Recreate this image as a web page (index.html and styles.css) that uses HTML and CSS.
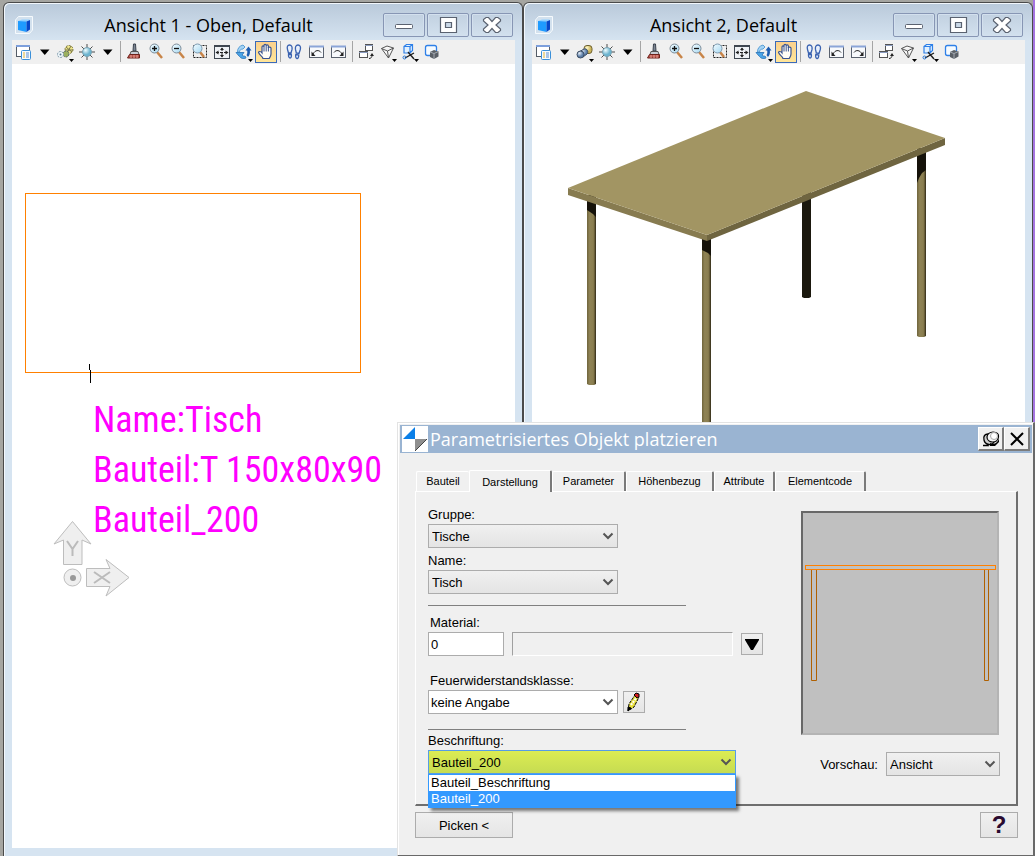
FILE: index.html
```html
<!DOCTYPE html>
<html lang="de">

<head>
    <meta charset="UTF-8">
    <meta name="viewport" content="width=device-width, initial-scale=1.0">
    <title>Parametrisiertes Objekt platzieren</title>
    <link rel="stylesheet" href="styles.css">
</head>

<body>
    <!-- shared icons -->
    <svg class="sprite" aria-hidden="true">
        <defs>
            <linearGradient id="lens" x1="0" y1="0" x2="1" y2="1">
                <stop offset="0" stop-color="#f4fcff"/>
                <stop offset="1" stop-color="#a5d8f2"/>
            </linearGradient>
            <radialGradient id="ball" cx="35%" cy="30%">
                <stop offset="0" stop-color="#f0fdff"/>
                <stop offset="1" stop-color="#6cb4cf"/>
            </radialGradient>
            <radialGradient id="gold" cx="35%" cy="30%">
                <stop offset="0" stop-color="#fffbd0"/>
                <stop offset="1" stop-color="#cdb55a"/>
            </radialGradient>
            <radialGradient id="steel" cx="35%" cy="30%">
                <stop offset="0" stop-color="#e6eef8"/>
                <stop offset="1" stop-color="#5b7ea8"/>
            </radialGradient>
            <linearGradient id="leg" x1="0" x2="1" y1="0" y2="0">
                <stop offset="0" stop-color="#6f643c"/>
                <stop offset="0.3" stop-color="#8f8355"/>
                <stop offset="0.7" stop-color="#8a7e50"/>
                <stop offset="0.85" stop-color="#665b36"/>
                <stop offset="1" stop-color="#2c2716"/>
            </linearGradient>
        </defs>
        <symbol id="i-app" viewBox="0 0 20 20">
            <path d="M4.500 1.500H18.500V15l-3 3.500H1.500V5z" fill="#d3e1ee" stroke="#f6fafd"/>
            <path d="M4 6l4-1.500h8l-3.500 2z" fill="#8fd0ff"/>
            <path d="M4 6l8.500 .5V17L4 15z" fill="#1e9bff"/>
            <path d="M12.500 6.500L16 5v9.500L12.500 17z" fill="#0647c8"/>
        </symbol>
        <symbol id="i-attr" viewBox="0 0 22 22">
            <rect x="3.500" y="4.500" width="13" height="11" fill="#fff" stroke="#555c66"/>
            <path d="M3 5h14" stroke="#7d9fdc" stroke-width="2"/>
            <rect x="8.500" y="9.500" width="9" height="9" rx="1" fill="#f4faff" stroke="#3a8fd8"/>
            <path d="M10 12h2M10 14h2M10 16h2" stroke="#e5b530"/>
            <path d="M13 12h3M13 14h3M13 16h3" stroke="#5e90d0"/>
        </symbol>
        <symbol id="i-down" viewBox="0 0 19 22">
            <path d="M5 8.500h9.500L9.750 14z" fill="#000"/>
        </symbol>
        <symbol id="i-corner" viewBox="0 0 22 22">
            <path d="M15 18h5l-2.500 3z" fill="#000"/>
        </symbol>
        <symbol id="i-wire" viewBox="0 0 22 22">
            <circle cx="15" cy="8.500" r="4" fill="#f0e68a" stroke="#7d7744" stroke-dasharray="2 1"/>
            <path d="M12 6l6 5M17 5l-4 7M11 9h8" stroke="#77774a"/>
            <circle cx="12" cy="13" r="3" fill="#9bb05f" stroke="#566" stroke-dasharray="2 1"/>
            <circle cx="6.500" cy="13.500" r="3" fill="#eef6fa" stroke="#7a96a8" stroke-dasharray="2 1"/>
            <circle cx="6.500" cy="13.500" r="1" fill="#5a7890"/>
        </symbol>
        <symbol id="i-shade" viewBox="0 0 22 22">
            <rect x="10" y="4.500" width="8" height="8" rx="3" fill="url(#gold)" stroke="#6d6030"/>
            <path d="M5 11l5-3c3-1 5 3 3 5l-4 3z" fill="url(#steel)" stroke="#3c4d63"/>
            <circle cx="6.500" cy="13.500" r="3.500" fill="url(#steel)" stroke="#3c4d63"/>
        </symbol>
        <symbol id="i-light" viewBox="0 0 22 22">
            <path d="M11 3v16M3 11h16M5.500 5.500l11 11M16.500 5.500l-11 11" stroke="#4c4c4c"/>
            <circle cx="11" cy="11" r="4.500" fill="url(#ball)" stroke="#7ba2b2"/>
        </symbol>
        <symbol id="i-brush" viewBox="0 0 22 22">
            <path d="M10.500 3h2l.5 7h-3z" fill="#7d8794" stroke="#39414d"/>
            <path d="M8 10.500h7l1 3H7z" fill="#c9ced6" stroke="#555"/>
            <path d="M6.500 13.500h10V17h-12z" fill="#b8564c" stroke="#6e211a"/>
            <path d="M8 17v-3M11 17v-3M14 17v-3" stroke="#e9a098"/>
        </symbol>
        <symbol id="i-zin" viewBox="0 0 22 22">
            <path d="M12 11l5 6" stroke="#c88448" stroke-width="2.500"/>
            <circle cx="9.500" cy="7.500" r="4.500" fill="url(#lens)" stroke="#7d8b98"/>
            <path d="M7 7.500h5M9.500 5v5" stroke="#111" stroke-width="1.300"/>
        </symbol>
        <symbol id="i-zout" viewBox="0 0 22 22">
            <path d="M12 11l5 6" stroke="#c88448" stroke-width="2.500"/>
            <circle cx="9.500" cy="7.500" r="4.500" fill="url(#lens)" stroke="#7d8b98"/>
            <path d="M7 7.500h5" stroke="#111" stroke-width="1.300"/>
        </symbol>
        <symbol id="i-zwin" viewBox="0 0 22 22">
            <rect x="4.500" y="4.500" width="13" height="12" fill="none" stroke="#222" stroke-dasharray="2 1"/>
            <path d="M11 11l4 5" stroke="#c88448" stroke-width="2.500"/>
            <circle cx="8.500" cy="7.500" r="4.500" fill="url(#lens)" stroke="#7d9ab0"/>
        </symbol>
        <symbol id="i-fit" viewBox="0 0 22 22">
            <rect x="3.500" y="4.500" width="15" height="13" fill="#eef1f5" stroke="#3e4650"/>
            <path d="M3 5.500h16" stroke="#3e4650"/>
            <path d="M5 11.500h12M11 7v9" stroke="#222" stroke-dasharray="3 1"/>
            <path d="M4.500 11.500l3-2v4zM17.500 11.500l-3-2v4zM11 6.500l-2 2.500h4zM11 16.500l-2-2.500h4z" fill="#222"/>
        </symbol>
        <symbol id="i-rot" viewBox="0 0 22 22">
            <path d="M10 4l2 2-2 2c-2 0-3.500 1-3.500 3H4.500c0-4 2-6 5.500-7z" fill="#a5d4f5" stroke="#5a9fd6"/>
            <path d="M3 11.500h8L9 14c1 1 2 1.500 3 1l1 2c-3 1-5 .5-6.500-1.500z" fill="#4aa5e8" stroke="#3a80bf"/>
            <path d="M12.500 9.500l3-4 3 4h-1.700c.5 3-.3 5-1.800 6.500l-1.500-2c.8-1 1-2.500 .7-4.500z" fill="#1c5cb0"/>
        </symbol>
        <symbol id="i-hand" viewBox="0 0 22 22">
            <path d="M8 17.500c-.5-2-3-3-4.500-6 .3-1.500 2.200-1.300 3.500 .5V6c0-1.500 2-1.500 2 0V4.500c0-1.500 2.200-1.500 2.200 0V5c0-1.500 2.200-1.500 2.200 .3V7c0-1.300 2.600-1.300 2.600 .3V13c0 2-.8 3-1.800 4.500z" fill="#fffdf5" stroke="#3a5490" stroke-width="1.200"/>
            <path d="M9 6v4.500M11.200 5v5.500M13.400 6v4.500" stroke="#3a5490"/>
        </symbol>
        <symbol id="i-feet" viewBox="0 0 22 22">
            <path d="M6.500 4c2 0 3 2 2.500 4.500L8 12H5.500L4.500 8.500C3.800 6 4.500 4 6.500 4zM5.500 13.500h2.800c.4 2-.2 3.500-1.200 3.500s-1.800-1.500-1.600-3.500z" fill="#e8f0fc" stroke="#3a62b0" stroke-width="1.300"/>
            <path d="M15 4c2 0 3 2 2.300 4.500L16 12.500l-2.700-.5L12.500 8.500C12 6 13 4 15 4zM12.800 13.500l2.900 .5c.2 2-.8 3.800-1.800 3.500-1.200-.2-1.500-2-1.100-4z" fill="#e8f0fc" stroke="#3a62b0" stroke-width="1.300"/>
        </symbol>
        <symbol id="i-prev" viewBox="0 0 22 22">
            <rect x="4.500" y="5.500" width="14" height="11" fill="#f7f9fc" stroke="#59616e"/>
            <path d="M4 5.500h15" stroke="#8ba5d8" stroke-width="2"/>
            <path d="M8 13c2-4 6-4.500 8-1.500" fill="none" stroke="#222"/>
            <path d="M6.500 10.500v4.500h4z" fill="#222"/>
        </symbol>
        <symbol id="i-next" viewBox="0 0 22 22">
            <rect x="4.500" y="5.500" width="14" height="11" fill="#f7f9fc" stroke="#59616e"/>
            <path d="M4 5.500h15" stroke="#8ba5d8" stroke-width="2"/>
            <path d="M7 11.500c2-3 6-2.500 8 1.500" fill="none" stroke="#222"/>
            <path d="M16.500 10.500v4.500h-4z" fill="#222"/>
        </symbol>
        <symbol id="i-copy" viewBox="0 0 22 22">
            <rect x="10.500" y="3.500" width="7" height="6" fill="#fff" stroke="#555"/>
            <rect x="4.500" y="10.500" width="8" height="6" fill="#fff" stroke="#555"/>
            <path d="M10 4.500h8M4 11.500h9" stroke="#8b9cc0"/>
            <path d="M14 17.500c2 0 3-1.500 3-3" fill="none" stroke="#222"/>
            <path d="M17 12l-2 3h4z" fill="#222"/>
        </symbol>
        <symbol id="i-persp" viewBox="0 0 22 22">
            <path d="M4.500 7.500L10 5l6.500 2-5 10zM4.500 7.500l6 2.500 6-3M10.500 10l1 7" fill="#fafafa" stroke="#555"/>
        </symbol>
        <symbol id="i-clip" viewBox="0 0 22 22">
            <path d="M5 5.500l2.500-2h6v6l-2.500 2.500H5zM5 5.500h6v6.500M11 5.500l2.500-2" fill="#e2f1ff" stroke="#2f80e8" stroke-width="1.200"/>
            <path d="M6 17l9-5M9 11l6 7" stroke="#1c1c1c" stroke-width="1.400"/>
            <circle cx="5.500" cy="16.500" r="1.500" fill="none" stroke="#2273d8"/>
        </symbol>
        <symbol id="i-mask" viewBox="0 0 22 22">
            <rect x="4.500" y="4.500" width="11" height="10" rx="2" fill="#f6fbff" stroke="#2f80e8" stroke-width="1.300"/>
            <path d="M9 11l4-2 4.500 1.500v5L13 18l-4-2z" fill="#5a5f66"/>
            <path d="M9 11l4 1.500 4.500-2M13 12.500V18" fill="none" stroke="#a5abb2"/>
        </symbol>
        <symbol id="i-min" viewBox="0 0 22 22">
            <rect x="2.500" y="10.500" width="17" height="4" rx="1" fill="#fff" stroke="#5a6270"/>
        </symbol>
        <symbol id="i-max" viewBox="0 0 22 22">
            <path d="M3.500 3.500h16v15h-16zM8.500 8.500v5h6v-5z" fill="#fff" fill-rule="evenodd" stroke="#5a6270" stroke-width="1.200"/>
        </symbol>
        <symbol id="i-x" viewBox="0 0 22 22">
            <path d="M2.500 5.500L5 3.500h2.500L11 7.500l3.500-4H17l2.500 2V7L15 11l4.500 4v1.500l-2.500 2h-2.500L11 14.500l-3.500 4H5l-2.500-2V15L7 11 2.500 7z" fill="#fff" stroke="#5a6270" stroke-width="1.200"/>
        </symbol>
        <symbol id="i-chev" viewBox="0 0 12 12">
            <path d="M1.500 3.500L6 8l4.500-4.500" fill="none" stroke="#555" stroke-width="2"/>
        </symbol>
    </svg>

    <div class="desktop">
        <section class="view">
            <header class="view-title">
                <svg class="app-icon"><use href="#i-app"/></svg>
                <h2>Ansicht 1 - Oben, Default</h2>
                <div class="caption-buttons">
                    <button type="button" aria-label="Minimieren"><svg><use href="#i-min"/></svg></button>
                    <button type="button" aria-label="Maximieren"><svg><use href="#i-max"/></svg></button>
                    <button type="button" aria-label="Schließen"><svg><use href="#i-x"/></svg></button>
                </div>
            </header>
            <div class="toolbar" role="toolbar">
                <button type="button" aria-label="Ansichtsattribute"><svg><use href="#i-attr"/></svg></button>
                <button type="button" class="arrow" aria-label="Mehr"><svg><use href="#i-down"/></svg></button>
                <button type="button" aria-label="Darstellungsart"><svg><use href="#i-wire"/><use href="#i-corner"/></svg></button>
                <button type="button" aria-label="Helligkeit"><svg><use href="#i-light"/></svg></button>
                <button type="button" class="arrow" aria-label="Mehr"><svg><use href="#i-down"/></svg></button>
                <span class="sep"></span>
                <button type="button" aria-label="Aktualisieren"><svg><use href="#i-brush"/></svg></button>
                <button type="button" aria-label="Vergrößern"><svg><use href="#i-zin"/></svg></button>
                <button type="button" aria-label="Verkleinern"><svg><use href="#i-zout"/></svg></button>
                <button type="button" aria-label="Ausschnitt"><svg><use href="#i-zwin"/></svg></button>
                <button type="button" aria-label="Einpassen"><svg><use href="#i-fit"/></svg></button>
                <button type="button" aria-label="Drehen"><svg><use href="#i-rot"/><use href="#i-corner"/></svg></button>
                <button type="button" class="active" aria-label="Schwenken"><svg><use href="#i-hand"/></svg></button>
                <span class="sep"></span>
                <button type="button" aria-label="Begehen"><svg><use href="#i-feet"/></svg></button>
                <button type="button" aria-label="Vorherige Ansicht"><svg><use href="#i-prev"/></svg></button>
                <button type="button" aria-label="Nächste Ansicht"><svg><use href="#i-next"/></svg></button>
                <span class="sep"></span>
                <button type="button" aria-label="Ansicht kopieren"><svg><use href="#i-copy"/></svg></button>
                <button type="button" aria-label="Perspektive"><svg><use href="#i-persp"/><use href="#i-corner"/></svg></button>
                <button type="button" aria-label="Volumen beschneiden"><svg><use href="#i-clip"/><use href="#i-corner"/></svg></button>
                <button type="button" aria-label="Maske"><svg><use href="#i-mask"/></svg></button>
            </div>
            <div class="canvas">
                <svg width="388" height="560" viewBox="12 64 388 560">
                    <rect x="25.500" y="193.500" width="335" height="179" fill="none" stroke="#ff8000"/>
                    <path d="M89.500 364v6M90.500 370v13" stroke="#000"/>
                    <g class="label">
                        <text x="93" y="432">Name:Tisch</text>
                        <text x="93" y="482">Bauteil:T 150x80x90</text>
                        <text x="93" y="532">Bauteil_200</text>
                    </g>
                    <g fill="#efefef" stroke="#bdbdbd">
                        <path d="M72.500 521.500L91 544l-9-4v24.500H63.500V540L54 544z"/>
                        <path d="M86.500 568.500H110l-4-9 23 18-23 18.500 4-9.500H86.500z"/>
                        <circle cx="72.500" cy="577.500" r="8.500"/>
                    </g>
                    <circle cx="73" cy="578" r="3" fill="#999"/>
                    <path d="M67 541l5.500 8 5.500-8M72.500 549v7M94 572l16 11M110 572l-16 11" fill="none" stroke="#bbb" stroke-width="2"/>
                </svg>
            </div>
        </section>

        <section class="view">
            <header class="view-title">
                <svg class="app-icon"><use href="#i-app"/></svg>
                <h2>Ansicht 2, Default</h2>
                <div class="caption-buttons">
                    <button type="button" aria-label="Minimieren"><svg><use href="#i-min"/></svg></button>
                    <button type="button" aria-label="Maximieren"><svg><use href="#i-max"/></svg></button>
                    <button type="button" aria-label="Schließen"><svg><use href="#i-x"/></svg></button>
                </div>
            </header>
            <div class="toolbar" role="toolbar">
                <button type="button" aria-label="Ansichtsattribute"><svg><use href="#i-attr"/></svg></button>
                <button type="button" class="arrow" aria-label="Mehr"><svg><use href="#i-down"/></svg></button>
                <button type="button" aria-label="Darstellungsart"><svg><use href="#i-shade"/><use href="#i-corner"/></svg></button>
                <button type="button" aria-label="Helligkeit"><svg><use href="#i-light"/></svg></button>
                <button type="button" class="arrow" aria-label="Mehr"><svg><use href="#i-down"/></svg></button>
                <span class="sep"></span>
                <button type="button" aria-label="Aktualisieren"><svg><use href="#i-brush"/></svg></button>
                <button type="button" aria-label="Vergrößern"><svg><use href="#i-zin"/></svg></button>
                <button type="button" aria-label="Verkleinern"><svg><use href="#i-zout"/></svg></button>
                <button type="button" aria-label="Ausschnitt"><svg><use href="#i-zwin"/></svg></button>
                <button type="button" aria-label="Einpassen"><svg><use href="#i-fit"/></svg></button>
                <button type="button" aria-label="Drehen"><svg><use href="#i-rot"/><use href="#i-corner"/></svg></button>
                <button type="button" class="active" aria-label="Schwenken"><svg><use href="#i-hand"/></svg></button>
                <span class="sep"></span>
                <button type="button" aria-label="Begehen"><svg><use href="#i-feet"/></svg></button>
                <button type="button" aria-label="Vorherige Ansicht"><svg><use href="#i-prev"/></svg></button>
                <button type="button" aria-label="Nächste Ansicht"><svg><use href="#i-next"/></svg></button>
                <span class="sep"></span>
                <button type="button" aria-label="Ansicht kopieren"><svg><use href="#i-copy"/></svg></button>
                <button type="button" aria-label="Perspektive"><svg><use href="#i-persp"/><use href="#i-corner"/></svg></button>
                <button type="button" aria-label="Volumen beschneiden"><svg><use href="#i-clip"/><use href="#i-corner"/></svg></button>
                <button type="button" aria-label="Maske"><svg><use href="#i-mask"/></svg></button>
            </div>
            <div class="canvas">
                <svg width="493" height="400" viewBox="532 64 493 400">
                    <!-- legs -->
                    <path d="M802 190h9v107l-2 1h-5l-2-1z" fill="#1b180e"/>
                    <path d="M587 195h9v189l-2 1h-5l-2-1z" fill="url(#leg)"/>
                    <path d="M587 195h9v22l-3-3-6-4z" fill="#15120a"/>
                    <path d="M917 148h9v188l-2 1h-5l-2-1z" fill="url(#leg)"/>
                    <path d="M917 148h9v22l-4 3-3 5-2 5z" fill="#15120a"/>
                    <path d="M702 236h9v220h-9z" fill="url(#leg)"/>
                    <path d="M702 236h9v20l-3-3-6-3z" fill="#15120a"/>
                    <!-- top -->
                    <path d="M568 188l139 47v6l-139-46z" fill="#877b50"/>
                    <path d="M707 235l238-97v7l-238 96z" fill="#6f6540"/>
                    <path d="M568 188L806 91l139 47-238 97z" fill="#a29563"/>
                </svg>
            </div>
        </section>
    </div>

    <div class="dialog" role="dialog" aria-labelledby="dialog-title">
        <header class="dialog-title">
            <svg class="logo" viewBox="0 0 26 26">
                <path d="M0 0h26v26H0z" fill="#fff"/>
                <path d="M13 1v12H1z" fill="#0a7fe8"/>
                <path d="M13 13h12L13 25z" fill="#8f8f8f"/>
                <path d="M25 13L13 25" stroke="#444"/>
            </svg>
            <h1 id="dialog-title">Parametrisiertes Objekt platzieren</h1>
            <button type="button" aria-label="Anheften">
                <svg viewBox="0 0 20 18">
                    <path d="M2 15.500h5l-1-3" fill="none" stroke="#000" stroke-width="1.500"/>
                    <path d="M3 10c-1-4 1-6 4-6l6 8c-1 2-3 3-5 2.500-3-.5-4.500-2-5-4.500z" fill="#ccc" stroke="#000" stroke-width="1.300"/>
                    <path d="M9 13c4 2 8 0 9-5v4l-4 4H9z" fill="#000"/>
                    <path d="M6 7c0-3 3-5 6-5 4 0 6 2 5.500 5-.5 3-3 5-6 5S6 10 6 7z" fill="#f4f4f4" stroke="#000" stroke-width="1.200"/>
                    <circle cx="13" cy="6" r="3.500" fill="#fff" stroke="#aaa"/>
                </svg>
            </button>
            <button type="button" aria-label="Schließen">
                <svg viewBox="0 0 20 18"><path d="M4 3l12 12M16 3L4 15" stroke="#000" stroke-width="2"/></svg>
            </button>
        </header>

        <div class="dialog-body">
            <div class="tabs" role="tablist">
                <button type="button" role="tab">Bauteil</button>
                <button type="button" role="tab" class="selected" aria-selected="true">Darstellung</button>
                <button type="button" role="tab">Parameter</button>
                <button type="button" role="tab">Höhenbezug</button>
                <button type="button" role="tab">Attribute</button>
                <button type="button" role="tab">Elementcode</button>
            </div>

            <div class="panel">
                <form class="fields">
                    <label for="gruppe">Gruppe:</label>
                    <span class="select medium">
                        <select id="gruppe"><option>Tische</option></select>
                        <svg><use href="#i-chev"/></svg>
                    </span>
                    <label for="name">Name:</label>
                    <span class="select medium">
                        <select id="name"><option>Tisch</option></select>
                        <svg><use href="#i-chev"/></svg>
                    </span>
                    <hr>
                    <label for="material" class="indent">Material:</label>
                    <div class="row material">
                        <input type="text" id="material" value="0">
                        <input type="text" class="readout" aria-label="Materialname" disabled>
                        <button type="button" class="small-button" aria-label="Material wählen">
                            <svg viewBox="0 0 20 20"><path d="M3 5h14v1l-6 10H9L3 6z" fill="#000"/></svg>
                        </button>
                    </div>
                    <label for="feuer" class="indent spaced">Feuerwiderstandsklasse:</label>
                    <div class="row">
                        <span class="select medium white">
                            <select id="feuer"><option>keine Angabe</option></select>
                            <svg><use href="#i-chev"/></svg>
                        </span>
                        <button type="button" class="small-button" aria-label="Bearbeiten">
                            <svg viewBox="0 0 20 20">
                                <path d="M4 19l1-7 6-9 4 2-5 10z" fill="#e8e03c" stroke="#000" stroke-dasharray="3 1"/>
                                <path d="M7 13l6-8" stroke="#fff" stroke-width="2" stroke-dasharray="2 1"/>
                                <path d="M4 19v-4l3 1z" fill="#000" stroke="#000"/>
                                <path d="M10 3l2-2 3 1v3l-2 1z" fill="#d02020" stroke="#000"/>
                            </svg>
                        </button>
                    </div>
                    <hr class="lower">
                    <label for="beschriftung" class="tight">Beschriftung:</label>
                    <span class="select wide open">
                        <select id="beschriftung"><option>Bauteil_200</option></select>
                        <svg><use href="#i-chev"/></svg>
                        <ul class="options" role="listbox">
                            <li role="option">Bauteil_Beschriftung</li>
                            <li role="option" class="current" aria-selected="true">Bauteil_200</li>
                        </ul>
                    </span>
                </form>

                <div class="preview">
                    <div class="preview-box">
                        <svg viewBox="803 513 194 220">
                            <path d="M811.500 569.500v111h5v-111M984.500 569.500v111h4v-111" fill="none" stroke="#b06000"/>
                            <rect x="805.500" y="565.500" width="190" height="4" fill="none" stroke="#ff8000"/>
                        </svg>
                    </div>
                    <div class="preview-select">
                        <label for="vorschau">Vorschau:</label>
                        <span class="select">
                            <select id="vorschau"><option>Ansicht</option></select>
                            <svg><use href="#i-chev"/></svg>
                        </span>
                    </div>
                </div>
            </div>

            <footer class="dialog-buttons">
                <button type="button" class="pick">Picken &lt;</button>
                <button type="button" class="help" aria-label="Hilfe">?</button>
            </footer>
        </div>
    </div>
</body>

</html>
```

FILE: styles.css
```css
* {
    box-sizing: border-box;
}

body {
    margin: 0;
    background-color: #a5a5a1;
    color: #000;
    font-family: "Liberation Sans", Arial, sans-serif;
    font-size: 13px;
}

button {
    padding: 0;
    border: none;
    background: none;
    color: inherit;
    font: inherit;
}

h1, h2 {
    margin: 0;
    font-family: "Open Sans", "Noto Sans", sans-serif;
    font-size: 18px;
    font-weight: 400;
}

.sprite {
    position: absolute;
    width: 0;
    height: 0;
}

/* view windows */
.desktop {
    display: grid;
    grid-template-columns: 520fr 510fr;
    min-height: 100vh;
    padding: 2px 0 0 3px;
    border-right: 2px solid #a474e0;
}

.view {
    display: flex;
    flex-direction: column;
    min-width: 0;
    padding: 0 7px 8px 8px;
    border: 1px solid #4a4a4a;
    border-bottom: none;
    border-radius: 6px 6px 0 0;
    background: linear-gradient(#b9c9da, #d6e4f1 38px);
    box-shadow: inset 1px 1px 0 #f2f7fc;
}

.view-title {
    display: flex;
    align-items: center;
    height: 37px;
    padding: 6px 2px 0 2px;
}

.view-title h2 {
    flex: 1;
    text-align: center;
    line-height: 24px;
}

.app-icon {
    width: 20px;
    height: 20px;
}

.caption-buttons {
    display: flex;
    gap: 2px;
}

.caption-buttons button {
    width: 42px;
    height: 24px;
    border: 1px solid #8796b4;
    border-radius: 2px;
    box-shadow: inset 0 0 0 1px #d3e0ee;
}

.caption-buttons svg {
    display: block;
    width: 22px;
    height: 22px;
    margin: 0 auto;
}

.toolbar {
    display: flex;
    height: 24px;
    padding: 1px 0 0 1px;
    background-color: #f0f0f0;
}

.toolbar button {
    width: 22px;
    height: 22px;
}

.toolbar button.arrow {
    width: 19px;
}

.toolbar svg {
    display: block;
    width: 100%;
    height: 22px;
}

.toolbar .active {
    background: linear-gradient(#fbd08c, #ffe69a);
    box-shadow: inset 0 0 0 1px #3c6ab8;
}

.sep {
    width: 6px;
    height: 21px;
    background: linear-gradient(#a5a5a5, #a5a5a5) center / 1px 100% no-repeat;
}

.canvas {
    flex: 1;
    overflow: hidden;
    background-color: #fff;
}

.canvas svg {
    display: block;
}

.label {
    fill: #ff00ff;
    font-family: "Liberation Sans Narrow", "Roboto Condensed", "Liberation Sans", sans-serif;
    font-size: 36px;
}

/* dialog */
.dialog {
    position: absolute;
    left: 397px;
    right: 0;
    top: 422px;
    border: 1px solid #e3e3e3;
    border-right: 2px solid #696969;
    border-bottom: 2px solid #696969;
    background-color: #f0f0f0;
    box-shadow: inset 1px 1px 0 #fff;
    padding: 2px 1px 2px 2px;
}

.dialog-title {
    display: flex;
    align-items: center;
    height: 28px;
    padding: 0 2px;
    background-color: #9ab4d2;
    color: #fff;
}

.dialog-title h1 {
    flex: 1;
    line-height: 28px;
    padding-left: 2px;
}

.logo {
    width: 26px;
    height: 26px;
}

.dialog-title button {
    width: 26px;
    height: 24px;
    border: 1px solid #fff;
    border-right: 2px solid #7c7c7c;
    border-bottom: 2px solid #7c7c7c;
    background-color: #f0f0f0;
}

.dialog-title button svg {
    display: block;
    width: 20px;
    height: 18px;
    margin: 0 auto;
}

.dialog-body {
    padding: 17px 14px 15px 15px;
}

.tabs {
    display: grid;
    grid-template-columns: 53px 83px 74px 88px 61px 91px;
    align-items: end;
    padding-left: 1px;
    font-size: 11px;
}

.tabs button {
    height: 20px;
    padding-bottom: 2px;
    border-top: 1px solid #fff;
    border-left: 1px solid #fff;
    border-right: 2px solid #7a7a7a;
    border-radius: 2px 2px 0 0;
}

.tabs button:first-child {
    border-right: none;
}

.tabs .selected {
    position: relative;
    height: 22px;
    margin-bottom: -1px;
    padding: 1px 0 0;
    background-color: #f0f0f0;
}

.panel {
    display: flex;
    justify-content: space-between;
    padding: 10px 16px 28px 12px;
    border: 1px solid #fff;
    border-right: 2px solid #6e6e6e;
    border-bottom: 2px solid #6e6e6e;
}

.fields {
    width: 335px;
}

.fields label {
    display: block;
    padding-top: 3px;
    line-height: 19px;
}

.fields .indent {
    padding-left: 2px;
}

.fields .spaced {
    padding-top: 15px;
}

.fields .tight {
    padding-top: 1px;
}

hr {
    width: 258px;
    height: 1px;
    margin: 11px 0 4px;
    border: none;
    background-color: #808080;
}

hr.lower {
    margin: 15px 0 0;
}

.row {
    display: flex;
    align-items: center;
    gap: 5px;
}

.row.material {
    gap: 8px;
}

.select {
    position: relative;
    display: block;
    height: 24px;
}

.select.medium {
    width: 190px;
}

.select.wide {
    width: 308px;
}

.select select {
    width: 100%;
    height: 24px;
    padding: 0 20px 0 3px;
    appearance: none;
    border: 1px solid #acacac;
    border-radius: 0;
    background: linear-gradient(#f0f0f0, #e4e4e4);
    color: #000;
    font: inherit;
}

.select.white select {
    padding-left: 2px;
    background: #fff;
}

.select > svg {
    position: absolute;
    right: 4px;
    top: 6px;
    width: 12px;
    height: 12px;
    pointer-events: none;
}

.select.open select {
    border-color: #569de5;
    background: linear-gradient(#dcec52, #c6dc52);
}

.options {
    position: absolute;
    left: 0;
    right: 0;
    top: 24px;
    z-index: 1;
    margin: 0;
    padding: 0;
    border: 1px solid #3399ff;
    background-color: #fff;
    box-shadow: 3px 3px 3px rgba(0, 0, 0, 0.5);
    list-style: none;
    line-height: 16px;
}

.options li {
    padding-left: 2px;
}

.options .current {
    background-color: #3399ff;
    color: #fff;
}

input[type="text"] {
    width: 76px;
    height: 24px;
    padding: 0 2px;
    border: 1px solid #acacac;
    background-color: #fff;
    font: inherit;
}

.row .readout {
    flex: 1;
    border-color: #a0a0a0 #fff #fff #a0a0a0;
    background-color: #f0f0f0;
}

.small-button {
    width: 22px;
    height: 22px;
    border: 1px solid #acacac;
    background: linear-gradient(#f0f0f0, #e5e5e5);
}

.small-button svg {
    display: block;
    width: 20px;
    height: 20px;
}

.preview {
    width: 199px;
    padding-top: 9px;
}

.preview-box {
    width: 198px;
    border: 2px solid #686868;
    border-right-color: #b4b4b4;
    border-bottom-color: #b4b4b4;
    background-color: #c0c0c0;
}

.preview-box svg {
    display: block;
    width: 194px;
    height: 220px;
}

.preview-select {
    display: flex;
    align-items: center;
    justify-content: flex-end;
    gap: 8px;
    padding-top: 17px;
}

.preview-select .select {
    width: 114px;
}

.dialog-buttons {
    display: flex;
    justify-content: space-between;
    padding-top: 6px;
}

.dialog-buttons button {
    height: 26px;
    border: 1px solid #acacac;
    background: linear-gradient(#f0f0f0, #e5e5e5);
}

.dialog-buttons .pick {
    width: 98px;
}

.dialog-buttons .help {
    width: 38px;
    color: #2a0a30;
    font-size: 24px;
    font-weight: 700;
    line-height: 24px;
}
```
